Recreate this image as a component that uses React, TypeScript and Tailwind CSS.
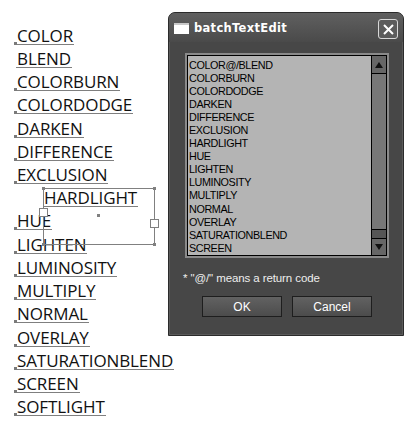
import React from "react";

const rows: { t: string; sq: boolean; indent?: boolean }[] = [
  { t: "COLOR", sq: true },
  { t: "BLEND", sq: false },
  { t: "COLORBURN", sq: true },
  { t: "COLORDODGE", sq: true },
  { t: "DARKEN", sq: true },
  { t: "DIFFERENCE", sq: true },
  { t: "EXCLUSION", sq: true },
  { t: "HARDLIGHT", sq: false, indent: true },
  { t: "HUE", sq: true },
  { t: "LIGHTEN", sq: true },
  { t: "LUMINOSITY", sq: true },
  { t: "MULTIPLY", sq: true },
  { t: "NORMAL", sq: true },
  { t: "OVERLAY", sq: true },
  { t: "SATURATIONBLEND", sq: true },
  { t: "SCREEN", sq: true },
  { t: "SOFTLIGHT", sq: true },
];

const listItems = [
  "COLOR@/BLEND",
  "COLORBURN",
  "COLORDODGE",
  "DARKEN",
  "DIFFERENCE",
  "EXCLUSION",
  "HARDLIGHT",
  "HUE",
  "LIGHTEN",
  "LUMINOSITY",
  "MULTIPLY",
  "NORMAL",
  "OVERLAY",
  "SATURATIONBLEND",
  "SCREEN",
];

export default function App() {
  return (
    <div className="relative w-[416px] h-[431px] bg-white overflow-hidden">
      {/* canvas text */}
      <div
        className="flex flex-col pt-[21.5px] text-[17px] text-[#111]"
        style={{ fontFamily: '"Open Sans", sans-serif' }}
      >
        {rows.map((r) => (
          <div key={r.t} className="h-[23.23px] flex items-end">
            <div
              className={
                "flex items-end border-b border-[#7f7f7f] " +
                (r.indent ? "ml-[44px] pr-[1px]" : r.sq ? "ml-[14px] pr-[1px]" : "ml-[16px] pr-[1px]")
              }
            >
              {r.sq ? (
                <span className="w-[3px] h-[3px] bg-[#7a7a7a] mb-[-1px] shrink-0" />
              ) : r.indent ? null : (
                <span className="w-[1px] shrink-0" />
              )}
              <span className="leading-[16px] tracking-[-0.1px]">{r.t}</span>
            </div>
          </div>
        ))}
      </div>

      {/* selection box */}
      <div className="absolute left-[43px] top-[188px] w-[112px] h-[57px] border border-[#808080]" />
      <div className="absolute left-[42px] top-[187px] w-[3px] h-[3px] bg-[#808080]" />
      <div className="absolute left-[153px] top-[187px] w-[3px] h-[3px] bg-[#808080]" />
      <div className="absolute left-[42px] top-[243px] w-[3px] h-[3px] bg-[#808080]" />
      <div className="absolute left-[153px] top-[243px] w-[3px] h-[3px] bg-[#808080]" />
      <div className="absolute left-[97px] top-[214px] w-[3px] h-[3px] bg-[#808080]" />
      <div className="absolute left-[39px] top-[208px] w-[9px] h-[9px] bg-white border border-[#808080]" />
      <div className="absolute left-[150px] top-[219px] w-[9px] h-[9px] bg-white border border-[#808080]" />

      {/* dialog */}
      <div
        className="absolute left-[168px] top-[12px] w-[236px] h-[324px] rounded-t-[7px] border border-[#2b2b2b] bg-[#474747] flex flex-col shadow-[inset_0_0_0_1px_#5a5a5a]"
        style={{ fontFamily: '"Liberation Sans", Arial, sans-serif' }}
      >
        {/* title bar */}
        <div className="h-[29px] rounded-t-[6px] bg-gradient-to-b from-[#606060] to-[#4a4a4a] flex items-center pl-[5px] pr-[4px] shrink-0">
          <div className="w-[15px] h-[11px] bg-white border-t-[2px] border-[#c8c8c8] mt-[2px]" />
          <div
            className="ml-[5px] text-white font-bold text-[11.5px] tracking-[0.3px] mt-[2px]"
            style={{ fontFamily: '"DejaVu Sans", sans-serif' }}
          >
            batchTextEdit
          </div>
          <div className="ml-auto mr-[1px] w-[20px] h-[20px] rounded-[3px] border border-[#d8d8d8] bg-[#5c5c5c] flex items-center justify-center mt-[3px]">
            <svg width="13" height="13" viewBox="0 0 13 13">
              <path d="M2 2 L11 11 M11 2 L2 11" stroke="white" strokeWidth="2" />
            </svg>
          </div>
        </div>

        {/* list frame */}
        <div className="mt-[11px] ml-[16px] w-[204px] h-[205px] bg-[#8a8a8a] p-[2px]">
          <div className="w-full h-full border border-black bg-[#b4b4b4] flex">
            <div className="flex-1 pl-[1px] pt-[3px] text-[10.8px] leading-[13.05px] text-black tracking-[-0.4px]">
              {listItems.map((it) => (
                <div key={it}>{it}</div>
              ))}
            </div>
            <div className="w-[15px] border-l border-black flex flex-col bg-[#777]">
              <div className="h-[18px] bg-[#666] border-b border-black flex items-center justify-center">
                <svg width="8" height="6" viewBox="0 0 8 6">
                  <path d="M4 0 L8 6 L0 6 Z" fill="#111" />
                </svg>
              </div>
              <div className="flex-1" />
              <div className="h-[10px] bg-[#555] border-y border-black" />
              <div className="h-[16px] bg-[#666] flex items-center justify-center">
                <svg width="8" height="6" viewBox="0 0 8 6">
                  <path d="M0 0 L8 0 L4 6 Z" fill="#111" />
                </svg>
              </div>
            </div>
          </div>
        </div>

        <div className="mt-[12px] ml-[14px] text-[11.5px] text-[#eeeeee] tracking-[-0.1px]">
          * "@/" means a return code
        </div>

        <div className="mt-[9px] flex gap-[10px] ml-[33px]">
          <div className="w-[80px] h-[21px] border border-[#1e1e1e] bg-gradient-to-b from-[#626262] to-[#4c4c4c] text-white text-[12px] flex items-center justify-center">
            OK
          </div>
          <div className="w-[80px] h-[21px] border border-[#1e1e1e] bg-gradient-to-b from-[#626262] to-[#4c4c4c] text-white text-[12px] flex items-center justify-center">
            Cancel
          </div>
        </div>
      </div>
    </div>
  );
}
